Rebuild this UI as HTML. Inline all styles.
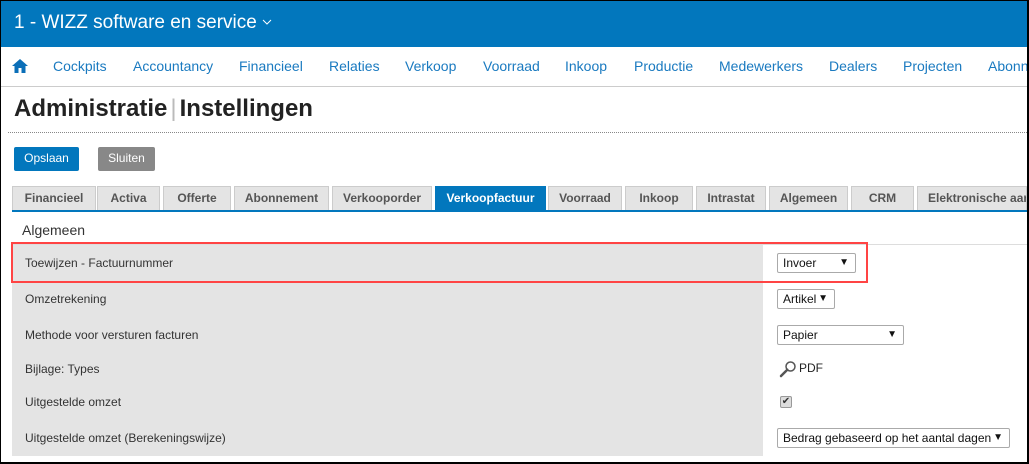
<!DOCTYPE html><html><head><style>
*{margin:0;padding:0;box-sizing:border-box}
html,body{width:1029px;height:464px;overflow:hidden}
body{font-family:"Liberation Sans",Arial,sans-serif;background:#fff;position:relative}
.a{position:absolute;white-space:nowrap}
.nav{font-size:14px;color:#1a7ac0;top:58px}
.tab{position:absolute;top:186px;height:24px;background:#e4e4e4;border:1px solid #ccc;border-bottom:none;font-size:12px;font-weight:bold;color:#555;text-align:center;line-height:23px;overflow:hidden;white-space:nowrap}
.lbl{position:absolute;left:25px;font-size:12px;color:#333}
.sel{position:absolute;left:777px;height:20px;border:1px solid #aaa;border-radius:2px;background:#fff;font-size:12px;color:#111;padding-left:5px;line-height:18px}
.sel i{position:absolute;right:6px;top:0;font-style:normal;font-size:10px}
</style></head><body>
<div class="a" style="left:0;top:0;width:1029px;height:47px;background:#0277bd"></div>
<div class="a" style="left:14px;top:12px;font-size:19px;color:#fff">1 - WIZZ software en service <svg width="10" height="6" viewBox="0 0 10 6" style="position:relative;top:-3px"><path d="M1 1l4 4 4-4" fill="none" stroke="#fff" stroke-width="1"/></svg></div>
<svg class="a" style="left:11px;top:58px" width="18" height="16" viewBox="0 0 18 16"><path d="M9 1L1 8h2.5v7h4v-5h3v5h4V8H17z" fill="#0b6fb8"/></svg>
<div class="a" style="left:0;top:47px;width:1027px;height:40px;overflow:hidden">
<div class="a nav" style="left:53px;top:11px">Cockpits</div><div class="a nav" style="left:133px;top:11px">Accountancy</div><div class="a nav" style="left:239px;top:11px">Financieel</div><div class="a nav" style="left:329px;top:11px">Relaties</div><div class="a nav" style="left:405px;top:11px">Verkoop</div><div class="a nav" style="left:483px;top:11px">Voorraad</div><div class="a nav" style="left:565px;top:11px">Inkoop</div><div class="a nav" style="left:634px;top:11px">Productie</div><div class="a nav" style="left:719px;top:11px">Medewerkers</div><div class="a nav" style="left:829px;top:11px">Dealers</div><div class="a nav" style="left:903px;top:11px">Projecten</div><div class="a nav" style="left:988px;top:11px">Abonnementen</div>
</div>
<div class="a" style="left:0;top:86px;width:1029px;height:1px;background:#ccc"></div>
<div class="a" style="left:14px;top:95px;font-size:24px;font-weight:bold;color:#222">Administratie<span style="color:#bbb;font-weight:normal;margin:0 3px">|</span>Instellingen</div>
<div class="a" style="left:8px;top:132px;width:1021px;border-top:1px dotted #888"></div>
<div class="a" style="left:14px;top:147px;width:65px;height:24px;background:#0277bd;border-radius:2px;color:#fff;font-size:12px;text-align:center;line-height:23px">Opslaan</div>
<div class="a" style="left:98px;top:147px;width:57px;height:24px;background:#888;border-radius:2px;color:#fff;font-size:12px;text-align:center;line-height:23px">Sluiten</div>
<div class="tab" style="left:12px;width:84px">Financieel</div><div class="tab" style="left:97px;width:63px">Activa</div><div class="tab" style="left:163px;width:68px">Offerte</div><div class="tab" style="left:234px;width:95px">Abonnement</div><div class="tab" style="left:332px;width:100px">Verkooporder</div><div class="tab" style="left:435px;width:111px;background:#0277bd;color:#fff;border-color:#0277bd">Verkoopfactuur</div><div class="tab" style="left:548px;width:74px">Voorraad</div><div class="tab" style="left:625px;width:68px">Inkoop</div><div class="tab" style="left:696px;width:70px">Intrastat</div><div class="tab" style="left:769px;width:79px">Algemeen</div><div class="tab" style="left:851px;width:63px">CRM</div><div class="tab" style="left:917px;width:110px;text-align:left;padding-left:10px">Elektronische aangifte</div>
<div class="a" style="left:12px;top:210px;width:1015px;height:2px;background:#0277bd"></div>
<div class="a" style="left:22px;top:222px;font-size:14px;color:#333">Algemeen</div>
<div class="a" style="left:12px;top:244px;width:1015px;height:1px;background:#ddd"></div>
<div class="a" style="left:12px;top:245px;width:751px;height:211px;background:#e4e4e4"></div>
<div class="a" style="left:11px;top:242px;width:857px;height:41px;border:2px solid #f44"></div>
<div class="lbl" style="top:256px">Toewijzen - Factuurnummer</div>
<div class="lbl" style="top:292px">Omzetrekening</div>
<div class="lbl" style="top:328px">Methode voor versturen facturen</div>
<div class="lbl" style="top:362px">Bijlage: Types</div>
<div class="lbl" style="top:395px">Uitgestelde omzet</div>
<div class="lbl" style="top:431px">Uitgestelde omzet (Berekeningswijze)</div>
<div class="sel" style="top:253px;width:79px">Invoer<i>&#9660;</i></div>
<div class="sel" style="top:289px;width:58px">Artikel<i>&#9660;</i></div>
<div class="sel" style="top:325px;width:127px">Papier<i>&#9660;</i></div>
<div class="sel" style="top:428px;width:233px">Bedrag gebaseerd op het aantal dagen<i>&#9660;</i></div>
<svg class="a" style="left:779px;top:360px" width="18" height="18" viewBox="0 0 18 18"><circle cx="11.5" cy="6.5" r="4.5" fill="none" stroke="#555" stroke-width="1.5"/><path d="M8.3 9.7L2 16" stroke="#555" stroke-width="2.5" stroke-linecap="round"/></svg>
<div class="a" style="left:799px;top:361px;font-size:12px;color:#222">PDF</div>
<div class="a" style="left:780px;top:396px;width:12px;height:12px;border:1px solid #999;border-radius:2px;background:#ddd;font-size:10px;line-height:10px;text-align:center;color:#333">&#10004;</div>
<div class="a" style="left:0;top:0;width:1029px;height:464px;border:1px solid #000;border-right-width:2px;border-bottom-width:2px"></div>
</body></html>
